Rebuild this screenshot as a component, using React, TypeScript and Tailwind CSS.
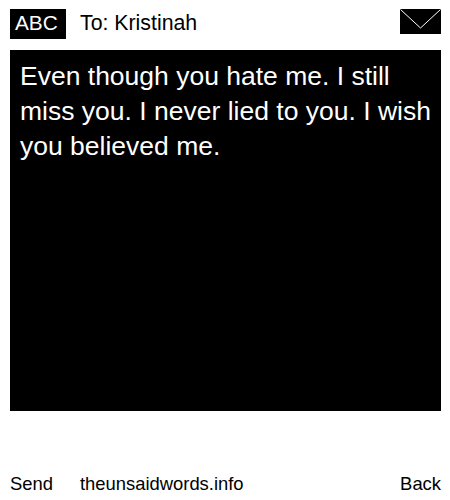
import React from "react";

export default function App() {
	return (
		<div className="w-[450px] h-[500px] bg-white text-black font-['Liberation_Sans',Arial,sans-serif] overflow-hidden">
			{/* Header */}
			<div className="h-[50px] pt-[9px] pl-[10px] pr-[9px] flex items-start">
				<div className="w-[56px] h-[30px] bg-black text-white text-[20.8px] leading-[28px] pl-[5px]">
					ABC
				</div>
				<div className="ml-[14px] text-[21.3px] leading-[28px]">To: Kristinah</div>
				<svg className="ml-auto" width="41" height="25" viewBox="0 0 41 25" shapeRendering="crispEdges">
					<rect width="41" height="25" fill="#000" />
					<path d="M0.5 0.5 L20.5 19 L40.5 0.5" fill="none" stroke="#fff" strokeWidth="1" shapeRendering="auto" />
				</svg>
			</div>

			{/* Message */}
			<div className="mx-[10px] w-[431px] h-[361px] bg-black text-white text-[26.5px] leading-[35px] px-[10px] py-[9px]">
				Even though you hate me. I still miss you. I never lied to you. I wish you believed me.
			</div>

			{/* Footer */}
			<div className="mt-[59px] px-[10px] pr-[9px] flex text-[18.4px] leading-[28px]">
				<span className="w-[70px]">Send</span>
				<span>theunsaidwords.info</span>
				<span className="ml-auto">Back</span>
			</div>
		</div>
	);
}
